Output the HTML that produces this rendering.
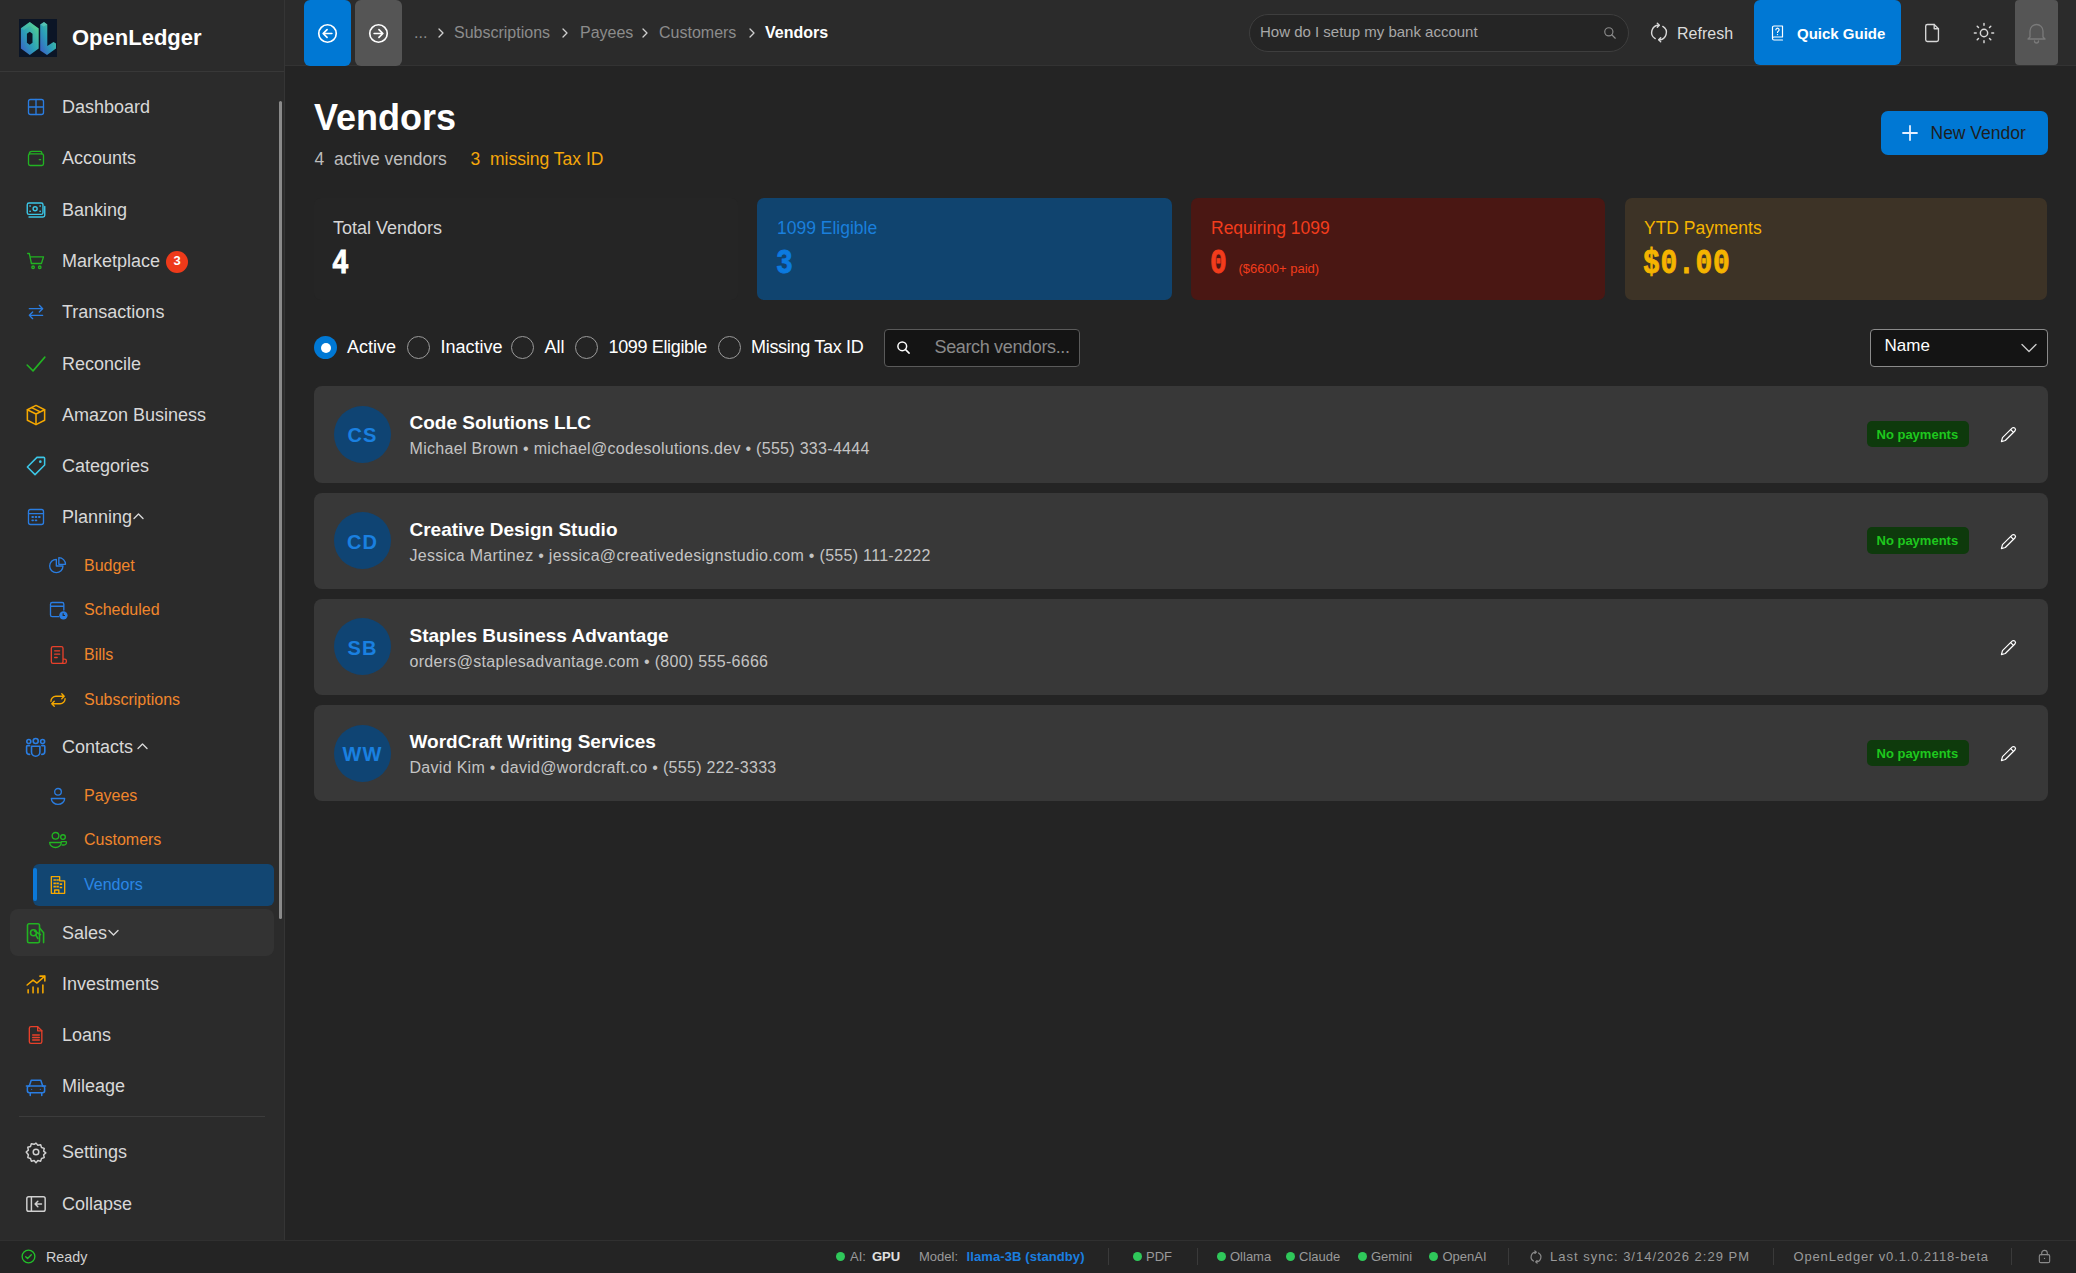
<!DOCTYPE html>
<html><head><meta charset="utf-8"><style>
html,body{margin:0;padding:0;width:2076px;height:1273px;overflow:hidden;background:#242424;}
body{position:relative;font-family:"Liberation Sans", sans-serif;}
.t{position:absolute;line-height:1;white-space:nowrap;}
.r{position:absolute;box-sizing:border-box;}
.i{position:absolute;overflow:visible;}
</style></head><body>
<div class="r" style="left:0px;top:0px;width:284px;height:1240px;background:#2b2b2b;border-radius:0px;"></div>
<div class="r" style="left:284px;top:0px;width:1px;height:1240px;background:#353535;border-radius:0px;"></div>
<div class="r" style="left:0px;top:71px;width:284px;height:1px;background:#383838;border-radius:0px;"></div>
<div class="r" style="left:19px;top:19px;width:38px;height:38px;background:#0b1526;border-radius:0px;"></div>
<svg class="i" style="left:19px;top:19px" width="38" height="38" viewBox="0 0 38 38">
<defs><linearGradient id="lg" x1="0" y1="1" x2="1" y2="0"><stop offset="0" stop-color="#3d58c8"/><stop offset="0.45" stop-color="#2b9fb8"/><stop offset="1" stop-color="#5ad88a"/></linearGradient></defs>
<path d="M10.8 2.9 L1.9 9.2 L1.9 29.6 L10.8 35.9 L19.7 29.6 L19.7 9.5 Z M10.7 12.8 L7.9 14.8 L7.9 23.8 L10.7 25.7 L13.5 23.8 L13.5 14.8 Z" fill="url(#lg)" fill-rule="evenodd"/>
<path d="M10.8 2.9 L1.9 9.2 L5 11 L10.8 7 L16.5 11 L19.7 9.5 Z" fill="#5fd0a0" opacity="0.35"/>
<path d="M21.2 5.5 L25 2.9 L28.3 5.5 L28.3 27 L34.5 23 L37 24.6 L37 29.6 L28 35.9 L21.2 31.5 Z" fill="url(#lg)"/>
<path d="M21.2 5.5 L25 2.9 L28.3 5.5 L24.7 7.5 Z" fill="#7fe0c0" opacity="0.4"/>
</svg>
<div class="t" style="left:72px;top:27.08px;font-size:22px;color:#ffffff;font-weight:700;font-family:'Liberation Sans', sans-serif;">OpenLedger</div>
<div class="r" style="left:279px;top:101px;width:3px;height:818px;background:#8a8a8a;border-radius:2px;"></div>
<div class="r" style="left:33px;top:864px;width:241px;height:42px;background:#124672;border-radius:6px;"></div>
<div class="r" style="left:33px;top:868px;width:4px;height:33px;background:#0b78d8;border-radius:2px;"></div>
<div class="r" style="left:10px;top:909px;width:264px;height:47px;background:#333333;border-radius:8px;"></div>
<div class="r" style="left:19px;top:1116px;width:246px;height:1px;background:#3c3c3c;border-radius:0px;"></div>
<svg class="i" style="left:26px;top:97px" width="20" height="20" viewBox="0 0 24 24"><rect x="3" y="3" width="18" height="18" rx="2.5" fill="none" stroke="#2a7de1" stroke-width="1.6" stroke-linecap="round" stroke-linejoin="round"/><path d="M12 3v18M3 12h18" fill="none" stroke="#2a7de1" stroke-width="1.6" stroke-linecap="round" stroke-linejoin="round"/></svg>
<div class="t" style="left:62px;top:98.26px;font-size:18px;color:#d8d8d8;font-weight:400;font-family:'Liberation Sans', sans-serif;">Dashboard</div>
<svg class="i" style="left:26px;top:147.8px" width="20" height="20" viewBox="0 0 24 24"><path d="M4 7 Q4 4 7 4 H17 Q19 4 19 6 V7" fill="none" stroke="#22b322" stroke-width="1.6" stroke-linecap="round" stroke-linejoin="round"/><rect x="3" y="7" width="18" height="14" rx="2" fill="none" stroke="#22b322" stroke-width="1.6" stroke-linecap="round" stroke-linejoin="round"/><path d="M16 14h1.5" fill="none" stroke="#22b322" stroke-width="1.6" stroke-linecap="round" stroke-linejoin="round"/></svg>
<div class="t" style="left:62px;top:149.06px;font-size:18px;color:#d8d8d8;font-weight:400;font-family:'Liberation Sans', sans-serif;">Accounts</div>
<svg class="i" style="left:26px;top:199.6px" width="20" height="20" viewBox="0 0 24 24"><g transform="translate(12 12) scale(1.05) translate(-12 -12)"><rect x="2" y="4" width="18" height="13" rx="2" fill="none" stroke="#3cc6e6" stroke-width="1.6" stroke-linecap="round" stroke-linejoin="round"/><circle cx="11" cy="10.5" r="2.3" fill="none" stroke="#3cc6e6" stroke-width="1.6" stroke-linecap="round" stroke-linejoin="round"/><path d="M5 7.5h.5M16.5 13.5h.5M5 13.5h.5M16.5 7.5h.5" fill="none" stroke="#3cc6e6" stroke-width="1.6" stroke-linecap="round" stroke-linejoin="round"/><path d="M4 20h16a2 2 0 0 0 2-2V8" fill="none" stroke="#3cc6e6" stroke-width="1.6" stroke-linecap="round" stroke-linejoin="round"/></g></svg>
<div class="t" style="left:62px;top:200.86px;font-size:18px;color:#d8d8d8;font-weight:400;font-family:'Liberation Sans', sans-serif;">Banking</div>
<svg class="i" style="left:26px;top:250.7px" width="20" height="20" viewBox="0 0 24 24"><path d="M2 3h2l2.5 12h12L21 7H5.5" fill="none" stroke="#22b322" stroke-width="1.6" stroke-linecap="round" stroke-linejoin="round"/><circle cx="8.5" cy="19.5" r="1.5" fill="none" stroke="#22b322" stroke-width="1.6" stroke-linecap="round" stroke-linejoin="round"/><circle cx="16.5" cy="19.5" r="1.5" fill="none" stroke="#22b322" stroke-width="1.6" stroke-linecap="round" stroke-linejoin="round"/></svg>
<div class="t" style="left:62px;top:251.96px;font-size:18px;color:#d8d8d8;font-weight:400;font-family:'Liberation Sans', sans-serif;">Marketplace</div>
<svg class="i" style="left:26px;top:301.7px" width="20" height="20" viewBox="0 0 24 24"><path d="M4 8h16M16 4l4 4-4 4M20 16H4M8 12l-4 4 4 4" fill="none" stroke="#2a7de1" stroke-width="1.6" stroke-linecap="round" stroke-linejoin="round"/></svg>
<div class="t" style="left:62px;top:302.96px;font-size:18px;color:#d8d8d8;font-weight:400;font-family:'Liberation Sans', sans-serif;">Transactions</div>
<svg class="i" style="left:26px;top:354px" width="20" height="20" viewBox="0 0 24 24"><g transform="translate(12 12) scale(1.18) translate(-12 -12)"><path d="M3 13l6 6L21 5" fill="none" stroke="#22b322" stroke-width="1.6" stroke-linecap="round" stroke-linejoin="round"/></g></svg>
<div class="t" style="left:62px;top:355.26px;font-size:18px;color:#d8d8d8;font-weight:400;font-family:'Liberation Sans', sans-serif;">Reconcile</div>
<svg class="i" style="left:26px;top:405.1px" width="20" height="20" viewBox="0 0 24 24"><g transform="translate(12 12) scale(1.15) translate(-12 -12)"><path d="M12 2 L21 6.5 V17.5 L12 22 L3 17.5 V6.5 Z" fill="none" stroke="#f5a800" stroke-width="1.6" stroke-linecap="round" stroke-linejoin="round"/><path d="M3 6.5 L12 11 L21 6.5M12 11v11M7.5 4.3l9 4.5" fill="none" stroke="#f5a800" stroke-width="1.6" stroke-linecap="round" stroke-linejoin="round"/></g></svg>
<div class="t" style="left:62px;top:406.36px;font-size:18px;color:#d8d8d8;font-weight:400;font-family:'Liberation Sans', sans-serif;">Amazon Business</div>
<svg class="i" style="left:26px;top:456.2px" width="20" height="20" viewBox="0 0 24 24"><g transform="translate(12 12) scale(1.15) translate(-12 -12)"><path d="M13 3H20a1 1 0 0 1 1 1v7L11 21 3 13Z" fill="none" stroke="#3cc6e6" stroke-width="1.6" stroke-linecap="round" stroke-linejoin="round"/><circle cx="16.5" cy="7.5" r="1.4" fill="#3cc6e6" stroke="none"/></g></svg>
<div class="t" style="left:62px;top:457.46px;font-size:18px;color:#d8d8d8;font-weight:400;font-family:'Liberation Sans', sans-serif;">Categories</div>
<svg class="i" style="left:26px;top:507px" width="20" height="20" viewBox="0 0 24 24"><rect x="3" y="3" width="18" height="18" rx="2.5" fill="none" stroke="#2a7de1" stroke-width="1.6" stroke-linecap="round" stroke-linejoin="round"/><path d="M3 8h18" fill="none" stroke="#2a7de1" stroke-width="1.6" stroke-linecap="round" stroke-linejoin="round"/><path d="M7.5 12h1M11.5 12h1M15.5 12h1M7.5 16h1M11.5 16h1" stroke="#2a7de1" stroke-width="2.2" stroke-linecap="round"/></svg>
<div class="t" style="left:62px;top:508.26px;font-size:18px;color:#d8d8d8;font-weight:400;font-family:'Liberation Sans', sans-serif;">Planning</div>
<svg class="i" style="left:26px;top:736.3px" width="20" height="20" viewBox="0 0 24 24"><g transform="scale(1.2)"><circle cx="2.8" cy="5.5" r="2" fill="none" stroke="#2a7de1" stroke-width="1.6" stroke-linecap="round" stroke-linejoin="round"/><circle cx="9.7" cy="5" r="2.5" fill="none" stroke="#2a7de1" stroke-width="1.6" stroke-linecap="round" stroke-linejoin="round"/><circle cx="16.6" cy="5.5" r="2" fill="none" stroke="#2a7de1" stroke-width="1.6" stroke-linecap="round" stroke-linejoin="round"/><path d="M5.5 10.2H13.9V16A4.2 4.2 0 0 1 5.5 16Z" fill="none" stroke="#2a7de1" stroke-width="1.6" stroke-linecap="round" stroke-linejoin="round"/><path d="M3.6 9.6H1.6Q0.6 9.6 0.6 10.6V15.4Q0.6 18.4 3.6 18.4M15.8 9.6H17.8Q18.8 9.6 18.8 10.6V15.4Q18.8 18.4 15.8 18.4" fill="none" stroke="#2a7de1" stroke-width="1.6" stroke-linecap="round" stroke-linejoin="round"/></g></svg>
<div class="t" style="left:62px;top:737.56px;font-size:18px;color:#d8d8d8;font-weight:400;font-family:'Liberation Sans', sans-serif;">Contacts</div>
<svg class="i" style="left:26px;top:922.9px" width="20" height="20" viewBox="0 0 24 24"><g transform="scale(1.2)"><path d="M3 0.8H12A1.5 1.5 0 0 1 13.5 2.3V18.2A1.5 1.5 0 0 1 12 19.7H3A1.5 1.5 0 0 1 1.5 18.2V2.3A1.5 1.5 0 0 1 3 0.8Z" fill="none" stroke="#22b322" stroke-width="1.6" stroke-linecap="round" stroke-linejoin="round"/><circle cx="7.5" cy="9.7" r="3" fill="none" stroke="#22b322" stroke-width="1.6" stroke-linecap="round" stroke-linejoin="round"/><path d="M8.5 8L14.5 11.6M13.6 5L17.6 9.7V19.6M9.6 11.8L11.9 15.5" fill="none" stroke="#22b322" stroke-width="1.6" stroke-linecap="round" stroke-linejoin="round"/></g></svg>
<div class="t" style="left:62px;top:924.16px;font-size:18px;color:#d8d8d8;font-weight:400;font-family:'Liberation Sans', sans-serif;">Sales</div>
<svg class="i" style="left:26px;top:974.1px" width="20" height="20" viewBox="0 0 24 24"><g transform="translate(12 12) scale(1.18) translate(-12 -12)"><path d="M3 13l6-5 4 3 8-7M16 4h5v5" fill="none" stroke="#f5a800" stroke-width="1.6" stroke-linecap="round" stroke-linejoin="round"/><path d="M4 21v-3M9 21v-6M14 21v-5M19 21v-8" fill="none" stroke="#f5a800" stroke-width="1.6" stroke-linecap="round" stroke-linejoin="round"/></g></svg>
<div class="t" style="left:62px;top:975.36px;font-size:18px;color:#d8d8d8;font-weight:400;font-family:'Liberation Sans', sans-serif;">Investments</div>
<svg class="i" style="left:26px;top:1024.6px" width="20" height="20" viewBox="0 0 24 24"><path d="M6 2h8l5 5v13a2 2 0 0 1-2 2H6a2 2 0 0 1-2-2V4a2 2 0 0 1 2-2Z" fill="none" stroke="#e8402a" stroke-width="1.6" stroke-linecap="round" stroke-linejoin="round"/><path d="M14 2v5h5M8 12h8M8 15h8M8 18h8" fill="none" stroke="#e8402a" stroke-width="1.6" stroke-linecap="round" stroke-linejoin="round"/></svg>
<div class="t" style="left:62px;top:1025.86px;font-size:18px;color:#d8d8d8;font-weight:400;font-family:'Liberation Sans', sans-serif;">Loans</div>
<svg class="i" style="left:26px;top:1076.1px" width="20" height="20" viewBox="0 0 24 24"><g transform="translate(12 12) scale(1.15) translate(-12 -11)"><path d="M5 11l2-6h10l2 6" fill="none" stroke="#2a7de1" stroke-width="1.6" stroke-linecap="round" stroke-linejoin="round"/><rect x="3" y="11" width="18" height="7" rx="2" fill="none" stroke="#2a7de1" stroke-width="1.6" stroke-linecap="round" stroke-linejoin="round"/><path d="M6 18v3M18 18v3M2 11h3M19 11h3" fill="none" stroke="#2a7de1" stroke-width="1.6" stroke-linecap="round" stroke-linejoin="round"/><circle cx="7.5" cy="14.5" r="0.6" fill="#2a7de1"/><circle cx="16.5" cy="14.5" r="0.6" fill="#2a7de1"/></g></svg>
<div class="t" style="left:62px;top:1077.36px;font-size:18px;color:#d8d8d8;font-weight:400;font-family:'Liberation Sans', sans-serif;">Mileage</div>
<svg class="i" style="left:26px;top:1142.1px" width="20" height="20" viewBox="0 0 24 24"><g transform="translate(12 12) scale(1.12) translate(-12 -12)"><circle cx="12" cy="12" r="3" fill="none" stroke="#d0d0d0" stroke-width="1.6" stroke-linecap="round" stroke-linejoin="round"/><path d="M12 2.5l2 2.3 3-.6.9 2.9 2.9 1-.6 3 2.3 1.9-2.3 2 .6 3-2.9.9-.9 2.9-3-.6-2 2.3-2-2.3-3 .6-.9-2.9-2.9-.9.6-3L1.5 12l2.3-2-.6-3 2.9-.9.9-2.9 3 .6Z" fill="none" stroke="#d0d0d0" stroke-width="1.6" stroke-linecap="round" stroke-linejoin="round"/></g></svg>
<div class="t" style="left:62px;top:1143.36px;font-size:18px;color:#d8d8d8;font-weight:400;font-family:'Liberation Sans', sans-serif;">Settings</div>
<svg class="i" style="left:26px;top:1194.2px" width="20" height="20" viewBox="0 0 24 24"><g transform="translate(12 12) scale(1.1) translate(-12 -12)"><rect x="2" y="4" width="20" height="16" rx="2" fill="none" stroke="#d0d0d0" stroke-width="1.6" stroke-linecap="round" stroke-linejoin="round"/><path d="M7 4v16M18 12h-7M14 9l-3 3 3 3" fill="none" stroke="#d0d0d0" stroke-width="1.6" stroke-linecap="round" stroke-linejoin="round"/></g></svg>
<div class="t" style="left:62px;top:1195.46px;font-size:18px;color:#d8d8d8;font-weight:400;font-family:'Liberation Sans', sans-serif;">Collapse</div>
<svg class="i" style="left:48px;top:556.4px" width="20" height="20" viewBox="0 0 24 24"><path d="M10 4a8 8 0 1 0 8 8h-8Z" fill="none" stroke="#2a7de1" stroke-width="1.6" stroke-linecap="round" stroke-linejoin="round"/><path d="M13 2a8 8 0 0 1 8 8h-8Z" fill="none" stroke="#2a7de1" stroke-width="1.6" stroke-linecap="round" stroke-linejoin="round"/></svg>
<div class="t" style="left:84px;top:558.36px;font-size:16px;color:#f0862c;font-weight:400;font-family:'Liberation Sans', sans-serif;">Budget</div>
<svg class="i" style="left:48px;top:599.8px" width="20" height="20" viewBox="0 0 24 24"><path d="M13 20H5a2 2 0 0 1-2-2V5a2 2 0 0 1 2-2h12a2 2 0 0 1 2 2v7M3 7.5h16" fill="none" stroke="#2a7de1" stroke-width="1.6" stroke-linecap="round" stroke-linejoin="round"/><circle cx="18.5" cy="18.5" r="5" fill="#2a7de1"/><path d="M18.2 16V18.6h2.2" stroke="#2b2b2b" stroke-width="1.4" fill="none"/></svg>
<div class="t" style="left:84px;top:601.76px;font-size:16px;color:#f0862c;font-weight:400;font-family:'Liberation Sans', sans-serif;">Scheduled</div>
<svg class="i" style="left:48px;top:644.6px" width="20" height="20" viewBox="0 0 24 24"><path d="M18 17V4a2 2 0 0 0-2-2H6a2 2 0 0 0-2 2v16a2 2 0 0 0 2 2h14a2 2 0 0 0 2-2v-1a2 2 0 0 0-2-2h-2v3a2 2 0 0 1-2 2" fill="none" stroke="#e8402a" stroke-width="1.6" stroke-linecap="round" stroke-linejoin="round"/><path d="M8 7h6M8 11h6M8 15h3" fill="none" stroke="#e8402a" stroke-width="1.6" stroke-linecap="round" stroke-linejoin="round"/></svg>
<div class="t" style="left:84px;top:646.56px;font-size:16px;color:#f0862c;font-weight:400;font-family:'Liberation Sans', sans-serif;">Bills</div>
<svg class="i" style="left:48px;top:689.7px" width="20" height="20" viewBox="0 0 24 24"><path d="M3.5 13.5A6 6 0 0 1 9.5 7.5H19.5M16.5 4.5L19.5 7.5 16.5 10.5M20.5 10.5A6 6 0 0 1 14.5 16.5H4.5M7.5 13.5L4.5 16.5 7.5 19.5" fill="none" stroke="#f5a800" stroke-width="1.6" stroke-linecap="round" stroke-linejoin="round"/></svg>
<div class="t" style="left:84px;top:691.66px;font-size:16px;color:#f0862c;font-weight:400;font-family:'Liberation Sans', sans-serif;">Subscriptions</div>
<svg class="i" style="left:48px;top:786.1px" width="20" height="20" viewBox="0 0 24 24"><circle cx="12" cy="7" r="4" fill="none" stroke="#2a7de1" stroke-width="1.6" stroke-linecap="round" stroke-linejoin="round"/><path d="M4 15h16a8 7 0 0 1-16 0Z" fill="none" stroke="#2a7de1" stroke-width="1.6" stroke-linecap="round" stroke-linejoin="round"/></svg>
<div class="t" style="left:84px;top:788.06px;font-size:16px;color:#f0862c;font-weight:400;font-family:'Liberation Sans', sans-serif;">Payees</div>
<svg class="i" style="left:48px;top:830.1px" width="20" height="20" viewBox="0 0 24 24"><circle cx="9" cy="7" r="4" fill="none" stroke="#22b322" stroke-width="1.6" stroke-linecap="round" stroke-linejoin="round"/><circle cx="18" cy="8.5" r="2.8" fill="none" stroke="#22b322" stroke-width="1.6" stroke-linecap="round" stroke-linejoin="round"/><path d="M2 15h14a7 6 0 0 1-14 0Z" fill="none" stroke="#22b322" stroke-width="1.6" stroke-linecap="round" stroke-linejoin="round"/><path d="M16 14h6a3.2 3 0 0 1-3.5 4H17" fill="none" stroke="#22b322" stroke-width="1.6" stroke-linecap="round" stroke-linejoin="round"/></svg>
<div class="t" style="left:84px;top:832.06px;font-size:16px;color:#f0862c;font-weight:400;font-family:'Liberation Sans', sans-serif;">Customers</div>
<svg class="i" style="left:48px;top:875.2px" width="20" height="20" viewBox="0 0 24 24"><path d="M4 2h10v5h6v15H4Z" fill="none" stroke="#f5a800" stroke-width="1.6" stroke-linecap="round" stroke-linejoin="round"/><path d="M7.5 6h1M11 6h1M7.5 10h1M11 10h1M7.5 14h1M11 14h1M15 11h1M15 15h1" stroke="#f5a800" stroke-width="2" stroke-linecap="square"/><path d="M8 22v-4h5v4" fill="none" stroke="#f5a800" stroke-width="1.6" stroke-linecap="round" stroke-linejoin="round"/></svg>
<div class="t" style="left:84px;top:877.16px;font-size:16px;color:#2b86e6;font-weight:400;font-family:'Liberation Sans', sans-serif;">Vendors</div>
<div class="r" style="left:166px;top:251px;width:22px;height:22px;background:#ee3a1a;border-radius:11px;"></div>
<div class="t" style="left:166px;top:253.70px;font-size:13px;color:#ffffff;font-weight:700;font-family:'Liberation Sans', sans-serif;width:22px;text-align:center;">3</div>
<svg class="i" style="left:133px;top:512px" width="11" height="8" viewBox="0 0 11 8"><path d="M1 6.5L5.5 2 10 6.5" fill="none" stroke="#d8d8d8" stroke-width="1.4" stroke-linecap="round" stroke-linejoin="round"/></svg>
<svg class="i" style="left:137px;top:742px" width="11" height="8" viewBox="0 0 11 8"><path d="M1 6.5L5.5 2 10 6.5" fill="none" stroke="#d8d8d8" stroke-width="1.4" stroke-linecap="round" stroke-linejoin="round"/></svg>
<svg class="i" style="left:108px;top:929px" width="11" height="8" viewBox="0 0 11 8"><path d="M1 1.5L5.5 6 10 1.5" fill="none" stroke="#d8d8d8" stroke-width="1.4" stroke-linecap="round" stroke-linejoin="round"/></svg>
<div class="r" style="left:285px;top:0px;width:1791px;height:65px;background:#2b2b2b;border-radius:0px;"></div>
<div class="r" style="left:285px;top:65px;width:1791px;height:1px;background:#333333;border-radius:0px;"></div>
<div class="r" style="left:304px;top:0px;width:47px;height:66px;background:#0078d4;border-radius:6px;"></div>
<div class="r" style="left:355px;top:0px;width:47px;height:66px;background:#555555;border-radius:6px;"></div>
<svg class="i" style="left:317px;top:22.5px" width="21" height="21" viewBox="0 0 24 24"><circle cx="12" cy="12" r="10" fill="none" stroke="#fff" stroke-width="1.9" stroke-linecap="round" stroke-linejoin="round"/><path d="M17 12H7.3M11.5 7.5L7 12l4.5 4.5" fill="none" stroke="#fff" stroke-width="1.9" stroke-linecap="round" stroke-linejoin="round"/></svg>
<svg class="i" style="left:368px;top:22.5px" width="21" height="21" viewBox="0 0 24 24"><circle cx="12" cy="12" r="10" fill="none" stroke="#fff" stroke-width="1.9" stroke-linecap="round" stroke-linejoin="round"/><path d="M7 12h9.7M12.5 7.5L17 12l-4.5 4.5" fill="none" stroke="#fff" stroke-width="1.9" stroke-linecap="round" stroke-linejoin="round"/></svg>
<div class="t" style="left:414px;top:25.36px;font-size:16px;color:#8c8c8c;font-weight:400;font-family:'Liberation Sans', sans-serif;">...</div>
<svg class="i" style="left:438px;top:28px" width="6" height="10" viewBox="0 0 6 10"><path d="M1 1l4 4-4 4" fill="none" stroke="#cfcfcf" stroke-width="1.3" stroke-linecap="round" stroke-linejoin="round"/></svg>
<svg class="i" style="left:562px;top:28px" width="6" height="10" viewBox="0 0 6 10"><path d="M1 1l4 4-4 4" fill="none" stroke="#cfcfcf" stroke-width="1.3" stroke-linecap="round" stroke-linejoin="round"/></svg>
<svg class="i" style="left:642px;top:28px" width="6" height="10" viewBox="0 0 6 10"><path d="M1 1l4 4-4 4" fill="none" stroke="#cfcfcf" stroke-width="1.3" stroke-linecap="round" stroke-linejoin="round"/></svg>
<svg class="i" style="left:749px;top:28px" width="6" height="10" viewBox="0 0 6 10"><path d="M1 1l4 4-4 4" fill="none" stroke="#cfcfcf" stroke-width="1.3" stroke-linecap="round" stroke-linejoin="round"/></svg>
<div class="t" style="left:454px;top:25.36px;font-size:16px;color:#8c8c8c;font-weight:400;font-family:'Liberation Sans', sans-serif;">Subscriptions</div>
<div class="t" style="left:580px;top:25.36px;font-size:16px;color:#8c8c8c;font-weight:400;font-family:'Liberation Sans', sans-serif;">Payees</div>
<div class="t" style="left:659px;top:25.36px;font-size:16px;color:#8c8c8c;font-weight:400;font-family:'Liberation Sans', sans-serif;">Customers</div>
<div class="t" style="left:765px;top:25.36px;font-size:16px;color:#ffffff;font-weight:700;font-family:'Liberation Sans', sans-serif;">Vendors</div>
<div class="r" style="left:1249px;top:14px;width:380px;height:38px;background:#252525;border-radius:19px;border:1px solid #3e3e3e;"></div>
<div class="t" style="left:1260px;top:23.80px;font-size:15px;color:#a8a8a8;font-weight:400;font-family:'Liberation Sans', sans-serif;">How do I setup my bank account</div>
<svg class="i" style="left:1603px;top:26px" width="14" height="14" viewBox="0 0 24 24"><circle cx="10" cy="10" r="7" fill="none" stroke="#8a8a8a" stroke-width="2" stroke-linecap="round" stroke-linejoin="round"/><path d="M15 15l6 6" fill="none" stroke="#8a8a8a" stroke-width="2" stroke-linecap="round" stroke-linejoin="round"/></svg>
<svg class="i" style="left:1650px;top:22px" width="18" height="21" viewBox="0 0 18 21"><path d="M9 3.2A7.2 7.2 0 0 0 5.2 16.6M9 17.8A7.2 7.2 0 0 0 12.8 4.4" fill="none" stroke="#d8d8d8" stroke-width="1.4" stroke-linecap="round" stroke-linejoin="round"/><path d="M7.3 1.2L9.3 3.2 7.3 5.2M10.7 15.8L8.7 17.8 10.7 19.8" fill="none" stroke="#d8d8d8" stroke-width="1.4" stroke-linecap="round" stroke-linejoin="round"/></svg>
<div class="t" style="left:1677px;top:26.26px;font-size:16px;color:#dcdcdc;font-weight:400;font-family:'Liberation Sans', sans-serif;">Refresh</div>
<div class="r" style="left:1754px;top:0px;width:147px;height:65px;background:#0078d4;border-radius:6px;"></div>
<svg class="i" style="left:1771px;top:24.5px" width="13" height="16" viewBox="0 0 13 16"><path d="M1.5 13.5V2.5A1.5 1.5 0 0 1 3 1H11.5V12H3A1.5 1.5 0 0 0 1.5 13.5 1.5 1.5 0 0 0 3 15H11.5" fill="none" stroke="#fff" stroke-width="1.2" stroke-linecap="round" stroke-linejoin="round"/><path d="M4.9 4.8a1.6 1.6 0 1 1 2.4 1.4c-.6.3-.8.7-.8 1.3" fill="none" stroke="#fff" stroke-width="1.2" stroke-linecap="round" stroke-linejoin="round"/><circle cx="6.5" cy="9.6" r="0.7" fill="#fff"/></svg>
<div class="t" style="left:1797px;top:25.60px;font-size:15px;color:#ffffff;font-weight:700;font-family:'Liberation Sans', sans-serif;">Quick Guide</div>
<svg class="i" style="left:1924px;top:23px" width="17" height="20" viewBox="0 0 20 22"><path d="M4 1h8l5 5v13a2 2 0 0 1-2 2H4a2 2 0 0 1-2-2V3a2 2 0 0 1 2-2Z" fill="none" stroke="#d8d8d8" stroke-width="1.6" stroke-linecap="round" stroke-linejoin="round"/><path d="M12 1v5h5" fill="none" stroke="#d8d8d8" stroke-width="1.6" stroke-linecap="round" stroke-linejoin="round"/></svg>
<svg class="i" style="left:1973px;top:22px" width="22" height="22" viewBox="0 0 24 24"><circle cx="12" cy="12" r="4" fill="none" stroke="#d8d8d8" stroke-width="1.6" stroke-linecap="round" stroke-linejoin="round"/><path d="M12 1.5v2M12 20.5v2M1.5 12h2M20.5 12h2M4.6 4.6l1.4 1.4M18 18l1.4 1.4M4.6 19.4L6 18M18 6l1.4-1.4" fill="none" stroke="#d8d8d8" stroke-width="1.6" stroke-linecap="round" stroke-linejoin="round"/></svg>
<div class="r" style="left:2015px;top:0px;width:43px;height:65px;background:#555555;border-radius:4px;"></div>
<svg class="i" style="left:2027px;top:22px" width="19" height="21" viewBox="0 0 19 21"><path d="M3 15V9a6.5 6.5 0 0 1 13 0v6l2 2H1Z" fill="none" stroke="#7a7a7a" stroke-width="1.3" stroke-linecap="round" stroke-linejoin="round"/><path d="M7.5 19a2 2 0 0 0 4 0" fill="none" stroke="#7a7a7a" stroke-width="1.3" stroke-linecap="round" stroke-linejoin="round"/></svg>
<div class="t" style="left:314px;top:100.43px;font-size:36px;color:#ffffff;font-weight:700;font-family:'Liberation Sans', sans-serif;">Vendors</div>
<div class="t" style="left:314.5px;top:151.29px;font-size:17.5px;color:#bdbdbd;font-weight:400;font-family:'Liberation Sans', sans-serif;">4</div>
<div class="t" style="left:334px;top:151.29px;font-size:17.5px;color:#bdbdbd;font-weight:400;font-family:'Liberation Sans', sans-serif;">active vendors</div>
<div class="t" style="left:470.5px;top:151.29px;font-size:17.5px;color:#f5a70a;font-weight:400;font-family:'Liberation Sans', sans-serif;">3</div>
<div class="t" style="left:490px;top:151.29px;font-size:17.5px;color:#f5a70a;font-weight:400;font-family:'Liberation Sans', sans-serif;">missing Tax ID</div>
<div class="r" style="left:1881px;top:111px;width:167px;height:44px;background:#0078d4;border-radius:7px;"></div>
<svg class="i" style="left:1902px;top:125px" width="16" height="16" viewBox="0 0 16 16"><path d="M8 1v14M1 8h14" fill="none" stroke="#e6f0ff" stroke-width="1.8" stroke-linecap="round" stroke-linejoin="round"/></svg>
<div class="t" style="left:1930.5px;top:124.69px;font-size:17.5px;color:#1e1e1e;font-weight:400;font-family:'Liberation Sans', sans-serif;">New Vendor</div>
<div class="r" style="left:314px;top:198px;width:424px;height:102px;background:#252525;border-radius:7px;"></div>
<div class="r" style="left:757px;top:198px;width:415px;height:102px;background:#10446f;border-radius:7px;"></div>
<div class="r" style="left:1191px;top:198px;width:414px;height:102px;background:#4a1713;border-radius:7px;"></div>
<div class="r" style="left:1625px;top:198px;width:422px;height:102px;background:#3d3326;border-radius:7px;"></div>
<div class="t" style="left:333px;top:219.26px;font-size:18px;color:#d6d6d6;font-weight:400;font-family:'Liberation Sans', sans-serif;">Total Vendors</div>
<div class="t" style="left:777px;top:219.69px;font-size:17.5px;color:#1a7fdc;font-weight:400;font-family:'Liberation Sans', sans-serif;">1099 Eligible</div>
<div class="t" style="left:1211px;top:219.69px;font-size:17.5px;color:#f23c1c;font-weight:400;font-family:'Liberation Sans', sans-serif;">Requiring 1099</div>
<div class="t" style="left:1644px;top:219.69px;font-size:17.5px;color:#f5b400;font-weight:400;font-family:'Liberation Sans', sans-serif;">YTD Payments</div>
<div class="t" style="left:332px;top:254.04px;font-size:28px;color:#ffffff;font-weight:700;font-family:'Liberation Mono', monospace;transform:scaleY(1.22);transform-origin:0 100%;-webkit-text-stroke:0.7px currentColor;">4</div>
<div class="t" style="left:776px;top:254.04px;font-size:28px;color:#0b7ae0;font-weight:700;font-family:'Liberation Mono', monospace;transform:scaleY(1.22);transform-origin:0 100%;-webkit-text-stroke:0.7px currentColor;">3</div>
<div class="t" style="left:1210px;top:254.04px;font-size:28px;color:#f23c1c;font-weight:700;font-family:'Liberation Mono', monospace;transform:scaleY(1.22);transform-origin:0 100%;-webkit-text-stroke:0.7px currentColor;">0</div>
<div class="t" style="left:1238.5px;top:261.50px;font-size:13px;color:#f23c1c;font-weight:400;font-family:'Liberation Sans', sans-serif;">($6600+ paid)</div>
<div class="t" style="left:1643px;top:254.04px;font-size:28px;color:#f5b400;font-weight:700;font-family:'Liberation Mono', monospace;letter-spacing:0.7px;transform:scaleY(1.22);transform-origin:0 100%;-webkit-text-stroke:0.7px currentColor;">$0.00</div>
<div class="r" style="left:314px;top:336px;width:23px;height:23px;background:#0078d4;border-radius:12px;"></div>
<div class="r" style="left:320.5px;top:342.5px;width:10px;height:10px;background:#ffffff;border-radius:5px;"></div>
<div class="t" style="left:347px;top:338.46px;font-size:18px;color:#ffffff;font-weight:400;font-family:'Liberation Sans', sans-serif;">Active</div>
<div class="r" style="left:407px;top:336px;width:23px;height:23px;background:transparent;border-radius:12px;border:1.5px solid #9a9a9a;"></div>
<div class="t" style="left:440.5px;top:338.46px;font-size:18px;color:#ffffff;font-weight:400;font-family:'Liberation Sans', sans-serif;">Inactive</div>
<div class="r" style="left:511px;top:336px;width:23px;height:23px;background:transparent;border-radius:12px;border:1.5px solid #9a9a9a;"></div>
<div class="t" style="left:544.5px;top:338.46px;font-size:18px;color:#ffffff;font-weight:400;font-family:'Liberation Sans', sans-serif;">All</div>
<div class="r" style="left:575px;top:336px;width:23px;height:23px;background:transparent;border-radius:12px;border:1.5px solid #9a9a9a;"></div>
<div class="t" style="left:608.5px;top:338.46px;font-size:18px;color:#ffffff;font-weight:400;font-family:'Liberation Sans', sans-serif;letter-spacing:-0.35px;">1099 Eligible</div>
<div class="r" style="left:718px;top:336px;width:23px;height:23px;background:transparent;border-radius:12px;border:1.5px solid #9a9a9a;"></div>
<div class="t" style="left:751px;top:338.46px;font-size:18px;color:#ffffff;font-weight:400;font-family:'Liberation Sans', sans-serif;letter-spacing:-0.3px;">Missing Tax ID</div>
<div class="r" style="left:884px;top:329px;width:196px;height:38px;background:#141414;border-radius:4px;border:1px solid #5a5a5a;"></div>
<svg class="i" style="left:896px;top:340px" width="15" height="15" viewBox="0 0 24 24"><circle cx="10" cy="10" r="7" fill="none" stroke="#ffffff" stroke-width="2.4" stroke-linecap="round" stroke-linejoin="round"/><path d="M15 15l6 6" fill="none" stroke="#ffffff" stroke-width="2.4" stroke-linecap="round" stroke-linejoin="round"/></svg>
<div class="t" style="left:934.5px;top:338.46px;font-size:18px;color:#8a8a8a;font-weight:400;font-family:'Liberation Sans', sans-serif;letter-spacing:-0.35px;">Search vendors...</div>
<div class="r" style="left:1870px;top:329px;width:178px;height:38px;background:#141414;border-radius:4px;border:1px solid #8a8a8a;"></div>
<div class="t" style="left:1884.5px;top:337.11px;font-size:17px;color:#ffffff;font-weight:400;font-family:'Liberation Sans', sans-serif;">Name</div>
<svg class="i" style="left:2021px;top:343px" width="16" height="10" viewBox="0 0 16 10"><path d="M1 1.5l7 7 7-7" fill="none" stroke="#cccccc" stroke-width="1.3" stroke-linecap="round" stroke-linejoin="round"/></svg>
<div class="r" style="left:314px;top:386.2px;width:1734px;height:96.4px;background:#383838;border-radius:8px;"></div>
<div class="r" style="left:333.5px;top:405.7px;width:57px;height:57px;background:#0f4473;border-radius:29px;"></div>
<div class="t" style="left:334px;top:425.27px;font-size:20px;color:#1a80e0;font-weight:700;font-family:'Liberation Sans', sans-serif;letter-spacing:1px;width:57px;text-align:center;">CS</div>
<div class="t" style="left:409.5px;top:413.42px;font-size:19px;color:#ffffff;font-weight:700;font-family:'Liberation Sans', sans-serif;">Code Solutions LLC</div>
<div class="t" style="left:409.5px;top:441.26px;font-size:16px;color:#c4c4c4;font-weight:400;font-family:'Liberation Sans', sans-serif;letter-spacing:0.3px;">Michael Brown • michael@codesolutions.dev • (555) 333-4444</div>
<div class="r" style="left:1867px;top:420.7px;width:102px;height:26.5px;background:#0e3a0c;border-radius:5px;"></div>
<div class="t" style="left:1876.5px;top:427.90px;font-size:13px;color:#1ec81e;font-weight:700;font-family:'Liberation Sans', sans-serif;">No payments</div>
<svg class="i" style="left:2000px;top:426.2px" width="17" height="17" viewBox="0 0 24 24"><path d="M17 3a2.8 2.8 0 0 1 4 4L7.5 20.5 2 22l1.5-5.5Z" fill="none" stroke="#ffffff" stroke-width="1.7" stroke-linecap="round" stroke-linejoin="round"/><path d="M15 5l4 4" fill="none" stroke="#ffffff" stroke-width="1.7" stroke-linecap="round" stroke-linejoin="round"/></svg>
<div class="r" style="left:314px;top:492.5px;width:1734px;height:96.4px;background:#383838;border-radius:8px;"></div>
<div class="r" style="left:333.5px;top:512.0px;width:57px;height:57px;background:#0f4473;border-radius:29px;"></div>
<div class="t" style="left:334px;top:531.57px;font-size:20px;color:#1a80e0;font-weight:700;font-family:'Liberation Sans', sans-serif;letter-spacing:1px;width:57px;text-align:center;">CD</div>
<div class="t" style="left:409.5px;top:519.72px;font-size:19px;color:#ffffff;font-weight:700;font-family:'Liberation Sans', sans-serif;">Creative Design Studio</div>
<div class="t" style="left:409.5px;top:547.56px;font-size:16px;color:#c4c4c4;font-weight:400;font-family:'Liberation Sans', sans-serif;letter-spacing:0.3px;">Jessica Martinez • jessica@creativedesignstudio.com • (555) 111-2222</div>
<div class="r" style="left:1867px;top:527.0px;width:102px;height:26.5px;background:#0e3a0c;border-radius:5px;"></div>
<div class="t" style="left:1876.5px;top:534.20px;font-size:13px;color:#1ec81e;font-weight:700;font-family:'Liberation Sans', sans-serif;">No payments</div>
<svg class="i" style="left:2000px;top:532.5px" width="17" height="17" viewBox="0 0 24 24"><path d="M17 3a2.8 2.8 0 0 1 4 4L7.5 20.5 2 22l1.5-5.5Z" fill="none" stroke="#ffffff" stroke-width="1.7" stroke-linecap="round" stroke-linejoin="round"/><path d="M15 5l4 4" fill="none" stroke="#ffffff" stroke-width="1.7" stroke-linecap="round" stroke-linejoin="round"/></svg>
<div class="r" style="left:314px;top:598.8px;width:1734px;height:96.4px;background:#383838;border-radius:8px;"></div>
<div class="r" style="left:333.5px;top:618.3px;width:57px;height:57px;background:#0f4473;border-radius:29px;"></div>
<div class="t" style="left:334px;top:637.87px;font-size:20px;color:#1a80e0;font-weight:700;font-family:'Liberation Sans', sans-serif;letter-spacing:1px;width:57px;text-align:center;">SB</div>
<div class="t" style="left:409.5px;top:626.02px;font-size:19px;color:#ffffff;font-weight:700;font-family:'Liberation Sans', sans-serif;">Staples Business Advantage</div>
<div class="t" style="left:409.5px;top:653.86px;font-size:16px;color:#c4c4c4;font-weight:400;font-family:'Liberation Sans', sans-serif;letter-spacing:0.3px;">orders@staplesadvantage.com • (800) 555-6666</div>
<svg class="i" style="left:2000px;top:638.8px" width="17" height="17" viewBox="0 0 24 24"><path d="M17 3a2.8 2.8 0 0 1 4 4L7.5 20.5 2 22l1.5-5.5Z" fill="none" stroke="#ffffff" stroke-width="1.7" stroke-linecap="round" stroke-linejoin="round"/><path d="M15 5l4 4" fill="none" stroke="#ffffff" stroke-width="1.7" stroke-linecap="round" stroke-linejoin="round"/></svg>
<div class="r" style="left:314px;top:705.1px;width:1734px;height:96.4px;background:#383838;border-radius:8px;"></div>
<div class="r" style="left:333.5px;top:724.6px;width:57px;height:57px;background:#0f4473;border-radius:29px;"></div>
<div class="t" style="left:334px;top:744.17px;font-size:20px;color:#1a80e0;font-weight:700;font-family:'Liberation Sans', sans-serif;letter-spacing:1px;width:57px;text-align:center;">WW</div>
<div class="t" style="left:409.5px;top:732.32px;font-size:19px;color:#ffffff;font-weight:700;font-family:'Liberation Sans', sans-serif;">WordCraft Writing Services</div>
<div class="t" style="left:409.5px;top:760.16px;font-size:16px;color:#c4c4c4;font-weight:400;font-family:'Liberation Sans', sans-serif;letter-spacing:0.3px;">David Kim • david@wordcraft.co • (555) 222-3333</div>
<div class="r" style="left:1867px;top:739.6px;width:102px;height:26.5px;background:#0e3a0c;border-radius:5px;"></div>
<div class="t" style="left:1876.5px;top:746.80px;font-size:13px;color:#1ec81e;font-weight:700;font-family:'Liberation Sans', sans-serif;">No payments</div>
<svg class="i" style="left:2000px;top:745.1px" width="17" height="17" viewBox="0 0 24 24"><path d="M17 3a2.8 2.8 0 0 1 4 4L7.5 20.5 2 22l1.5-5.5Z" fill="none" stroke="#ffffff" stroke-width="1.7" stroke-linecap="round" stroke-linejoin="round"/><path d="M15 5l4 4" fill="none" stroke="#ffffff" stroke-width="1.7" stroke-linecap="round" stroke-linejoin="round"/></svg>
<div class="r" style="left:0px;top:1240px;width:2076px;height:33px;background:#242424;border-radius:0px;"></div>
<div class="r" style="left:0px;top:1240px;width:2076px;height:1px;background:#303030;border-radius:0px;"></div>
<svg class="i" style="left:21px;top:1249px" width="15" height="15" viewBox="0 0 16 16"><circle cx="8" cy="8" r="6.8" fill="none" stroke="#22c02a" stroke-width="1.4" stroke-linecap="round" stroke-linejoin="round"/><path d="M5 8.2l2 2 4-4" fill="none" stroke="#22c02a" stroke-width="1.4" stroke-linecap="round" stroke-linejoin="round"/></svg>
<div class="t" style="left:46px;top:1249.90px;font-size:14.3px;color:#d0d0d0;font-weight:400;font-family:'Liberation Sans', sans-serif;">Ready</div>
<div class="r" style="left:835.5px;top:1252px;width:9px;height:9px;background:#2fc85a;border-radius:4.5px;"></div>
<div class="t" style="left:850px;top:1249.90px;font-size:13px;color:#9a9a9a;font-weight:400;font-family:'Liberation Sans', sans-serif;">AI:</div>
<div class="t" style="left:872px;top:1249.90px;font-size:13px;color:#e0e0e0;font-weight:700;font-family:'Liberation Sans', sans-serif;">GPU</div>
<div class="t" style="left:919px;top:1249.90px;font-size:13px;color:#9a9a9a;font-weight:400;font-family:'Liberation Sans', sans-serif;">Model:</div>
<div class="t" style="left:966.5px;top:1249.90px;font-size:13px;color:#1a7fe0;font-weight:700;font-family:'Liberation Sans', sans-serif;letter-spacing:0.1px;">llama-3B (standby)</div>
<div class="r" style="left:1108px;top:1248px;width:1px;height:17px;background:#3a3a3a;border-radius:0px;"></div>
<div class="r" style="left:1197px;top:1248px;width:1px;height:17px;background:#3a3a3a;border-radius:0px;"></div>
<div class="r" style="left:1508px;top:1248px;width:1px;height:17px;background:#3a3a3a;border-radius:0px;"></div>
<div class="r" style="left:1773px;top:1248px;width:1px;height:17px;background:#3a3a3a;border-radius:0px;"></div>
<div class="r" style="left:2011px;top:1248px;width:1px;height:17px;background:#3a3a3a;border-radius:0px;"></div>
<div class="r" style="left:1132.5px;top:1252px;width:9px;height:9px;background:#2fc85a;border-radius:4.5px;"></div>
<div class="t" style="left:1146px;top:1249.90px;font-size:13px;color:#9a9a9a;font-weight:400;font-family:'Liberation Sans', sans-serif;">PDF</div>
<div class="r" style="left:1216.5px;top:1252px;width:9px;height:9px;background:#2fc85a;border-radius:4.5px;"></div>
<div class="t" style="left:1230px;top:1249.90px;font-size:13px;color:#9a9a9a;font-weight:400;font-family:'Liberation Sans', sans-serif;">Ollama</div>
<div class="r" style="left:1285.5px;top:1252px;width:9px;height:9px;background:#2fc85a;border-radius:4.5px;"></div>
<div class="t" style="left:1299px;top:1249.90px;font-size:13px;color:#9a9a9a;font-weight:400;font-family:'Liberation Sans', sans-serif;">Claude</div>
<div class="r" style="left:1358.0px;top:1252px;width:9px;height:9px;background:#2fc85a;border-radius:4.5px;"></div>
<div class="t" style="left:1371px;top:1249.90px;font-size:13px;color:#9a9a9a;font-weight:400;font-family:'Liberation Sans', sans-serif;">Gemini</div>
<div class="r" style="left:1429.0px;top:1252px;width:9px;height:9px;background:#2fc85a;border-radius:4.5px;"></div>
<div class="t" style="left:1442.5px;top:1249.90px;font-size:13px;color:#9a9a9a;font-weight:400;font-family:'Liberation Sans', sans-serif;">OpenAI</div>
<svg class="i" style="left:1529.5px;top:1249.5px" width="12" height="14" viewBox="0 0 18 21"><path d="M9 3.2A7.2 7.2 0 0 0 5.2 16.6M9 17.8A7.2 7.2 0 0 0 12.8 4.4" fill="none" stroke="#8a8a8a" stroke-width="1.8" stroke-linecap="round" stroke-linejoin="round"/><path d="M7.3 1.2L9.3 3.2 7.3 5.2M10.7 15.8L8.7 17.8 10.7 19.8" fill="none" stroke="#8a8a8a" stroke-width="1.8" stroke-linecap="round" stroke-linejoin="round"/></svg>
<div class="t" style="left:1550px;top:1249.90px;font-size:13px;color:#9a9a9a;font-weight:400;font-family:'Liberation Sans', sans-serif;letter-spacing:1.0px;">Last sync: 3/14/2026 2:29 PM</div>
<div class="t" style="left:1793.5px;top:1249.90px;font-size:13px;color:#9a9a9a;font-weight:400;font-family:'Liberation Sans', sans-serif;letter-spacing:0.85px;">OpenLedger v0.1.0.2118-beta</div>
<svg class="i" style="left:2037px;top:1249px" width="15" height="15" viewBox="0 0 16 16"><rect x="2.5" y="6" width="11" height="8.5" rx="1.5" fill="none" stroke="#8a8a8a" stroke-width="1.2" stroke-linecap="round" stroke-linejoin="round"/><path d="M5 6V4.5a3 3 0 0 1 6 0V6" fill="none" stroke="#8a8a8a" stroke-width="1.2" stroke-linecap="round" stroke-linejoin="round"/><circle cx="8" cy="10" r="0.7" fill="#8a8a8a"/></svg>
</body></html>
